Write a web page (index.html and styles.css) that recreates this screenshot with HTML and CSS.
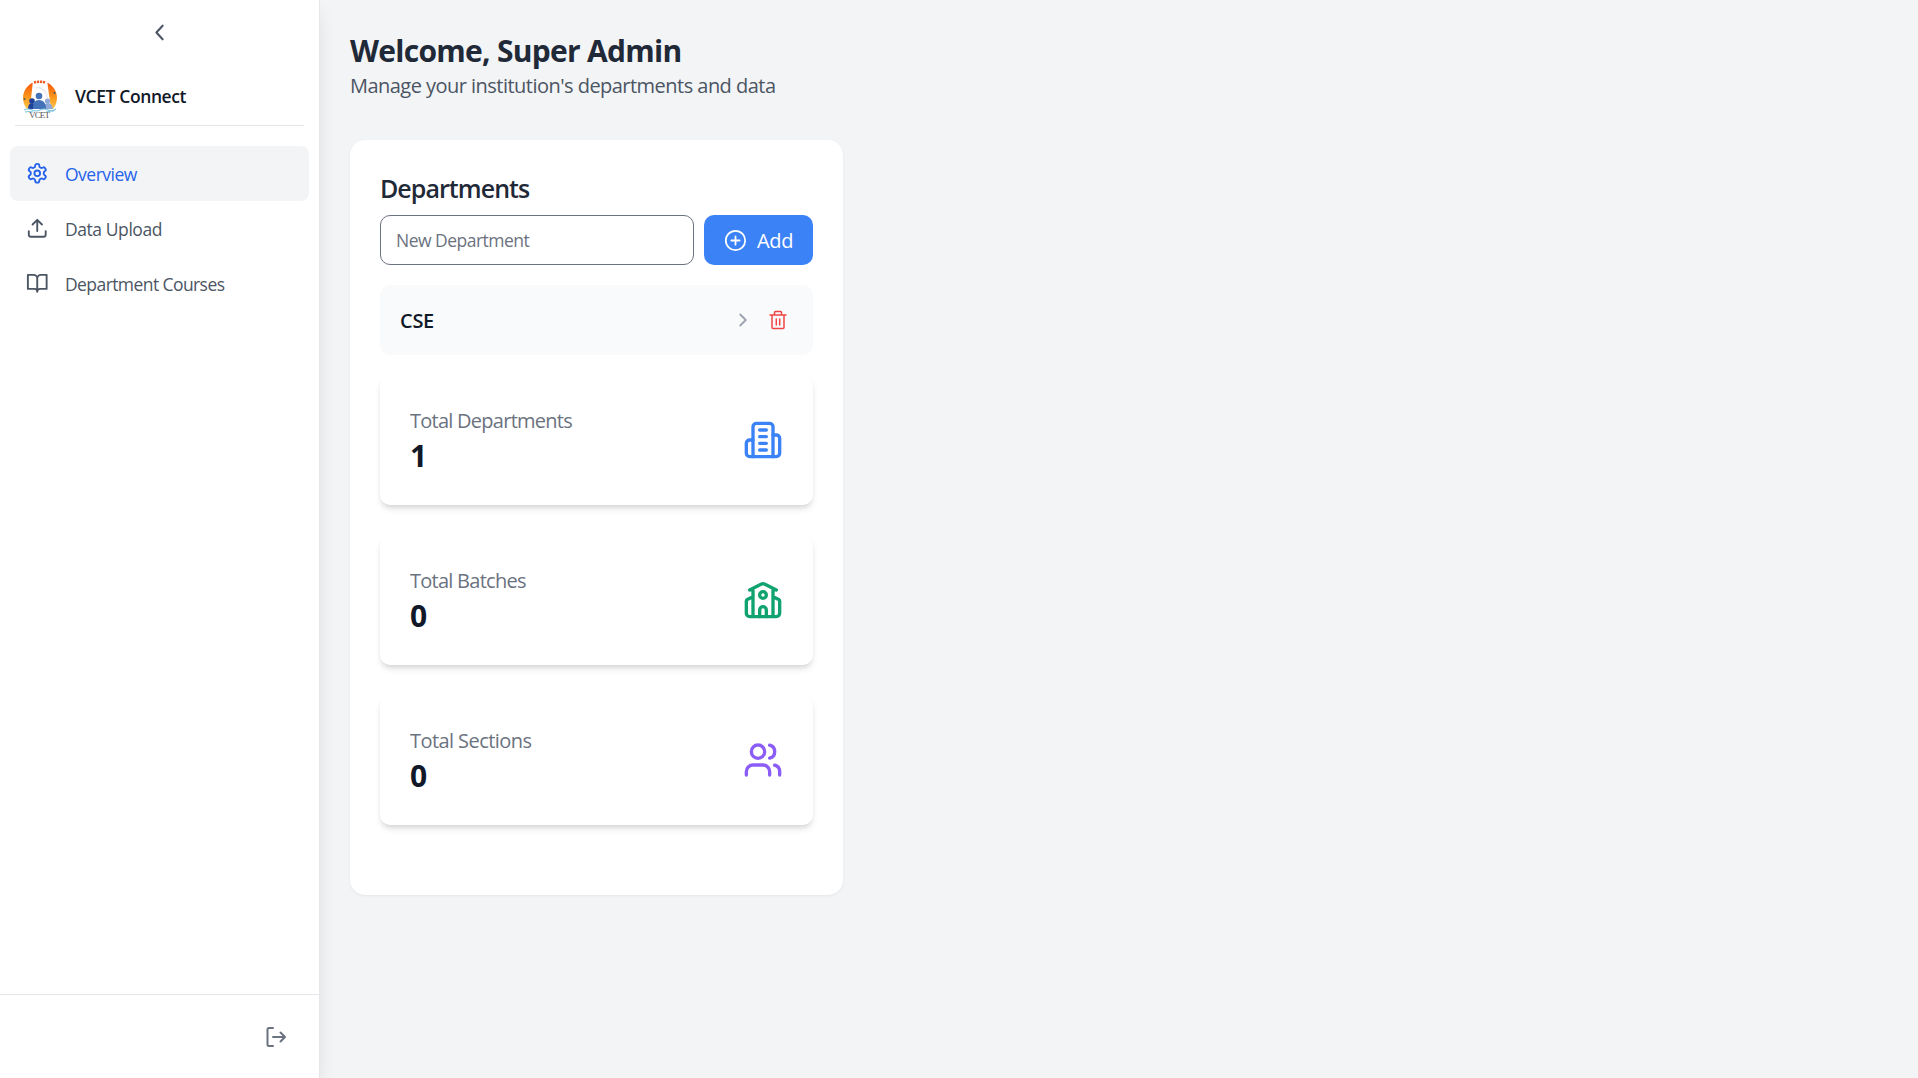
FILE: index.html
```html
<!DOCTYPE html>
<html lang="en">
<head>
<meta charset="utf-8">
<title>VCET Connect</title>
<link rel="stylesheet" href="styles.css">
</head>
<body>
<aside class="sidebar">
  <button class="collapse" aria-label="Collapse">
    <svg class="icon" width="25" height="25" viewBox="0 0 24 24"><path d="m15 18.500-6-6.500 6-6.500"/></svg>
  </button>
  <div class="brand">
    <svg class="logo" width="36" height="40" viewBox="0 0 36 40">
      <defs>
        <linearGradient id="sun" x1="0" y1="0" x2="0" y2="1"><stop offset="0" stop-color="#f4510b"/><stop offset=".5" stop-color="#fb9a1c"/><stop offset="1" stop-color="#fde26a"/></linearGradient>
        <clipPath id="disc"><path d="M0 0h36v29H0z"/></clipPath>
      </defs>
      <g clip-path="url(#disc)">
        <circle cx="18" cy="18" r="17" fill="url(#sun)"/>
        <path d="M11 0h14l4 29H8z" fill="#fff"/>
        <path d="M12 2.500q6-1.500 12 0" fill="none" stroke="#ee5a25" stroke-width="2.600" stroke-dasharray="2.200 .8"/>
        <path d="M13 8q9-2 13 11M16 7q8 3 10 8" fill="none" stroke="#d5d9de" stroke-width=".6"/>
        <circle cx="10" cy="21" r="2.800" fill="#21409a"/><path d="M6 29q0-6 4-6t6 6z" fill="#21409a"/>
        <circle cx="25.500" cy="21" r="2.600" fill="#8fa9d8"/><path d="M21 29q1-6 5-6t5 6z" fill="#8fa9d8"/>
        <circle cx="17" cy="16" r="3.300" fill="#4472b8"/><path d="M11 29v-2q0-7 6-7t7 7v2z" fill="#4472b8"/>
        <circle cx="2.500" cy="19" r=".9" fill="#456"/><circle cx="32.500" cy="13" r="1" fill="#456"/>
      </g>
      <path d="M2 30q4-2 8 0t8 0 8 0 8-1M3 32q4-1 8 0m13 0q4-1 8-1" fill="none" stroke="#7cc6df" stroke-width="1.100"/>
      <text class="logo-text" x="7" y="38" textLength="21">VCET</text>
    </svg>
    <span class="brand-name">VCET Connect</span>
  </div>
  <nav class="nav">
    <a class="nav-item active">
      <svg class="icon" width="22.500" height="22.500" viewBox="0 0 24 24"><path d="M12.220 2h-.44a2 2 0 0 0-2 2v.18a2 2 0 0 1-1 1.730l-.43.25a2 2 0 0 1-2 0l-.15-.08a2 2 0 0 0-2.730.730l-.22.38a2 2 0 0 0 .73 2.730l.15.1a2 2 0 0 1 1 1.720v.51a2 2 0 0 1-1 1.740l-.15.09a2 2 0 0 0-.73 2.730l.22.38a2 2 0 0 0 2.730.730l.15-.08a2 2 0 0 1 2 0l.43.25a2 2 0 0 1 1 1.730V20a2 2 0 0 0 2 2h.44a2 2 0 0 0 2-2v-.18a2 2 0 0 1 1-1.730l.43-.25a2 2 0 0 1 2 0l.15.08a2 2 0 0 0 2.730-.73l.22-.39a2 2 0 0 0-.73-2.730l-.15-.08a2 2 0 0 1-1-1.740v-.5a2 2 0 0 1 1-1.740l.15-.09a2 2 0 0 0 .73-2.730l-.22-.38a2 2 0 0 0-2.730-.73l-.15.08a2 2 0 0 1-2 0l-.43-.25a2 2 0 0 1-1-1.730V4a2 2 0 0 0-2-2z"/><circle cx="12" cy="12" r="3"/></svg>
      <span class="nav-label">Overview</span>
    </a>
    <a class="nav-item">
      <svg class="icon" width="22.500" height="22.500" viewBox="0 0 24 24"><path d="M21 15v4a2 2 0 0 1-2 2H5a2 2 0 0 1-2-2v-4"/><path d="m17 8-5-5-5 5M12 3v12"/></svg>
      <span class="nav-label upload">Data Upload</span>
    </a>
    <a class="nav-item">
      <svg class="icon" width="22.500" height="22.500" viewBox="0 0 24 24"><path d="M2 3h6a4 4 0 0 1 4 4v14a3 3 0 0 0-3-3H2zM22 3h-6a4 4 0 0 0-4 4v14a3 3 0 0 1 3-3h7z"/></svg>
      <span class="nav-label courses">Department Courses</span>
    </a>
  </nav>
  <div class="sidebar-footer">
    <svg class="icon" width="24" height="24" viewBox="0 0 24 24"><path d="M9 21H5a1.500 1.500 0 0 1-1.500-1.500v-15A1.500 1.500 0 0 1 5 3h4M9 12h12M16.500 7.500 21 12l-4.500 4.500"/></svg>
  </div>
</aside>
<main class="main">
  <h1 class="title">Welcome, Super Admin</h1>
  <p class="subtitle">Manage your institution's departments and data</p>
  <section class="panel">
    <h2 class="panel-title">Departments</h2>
    <form class="add-form">
      <input class="field" type="text" placeholder="New Department">
      <button type="button" class="add">
        <svg class="icon" width="25" height="25" viewBox="0 0 24 24"><circle cx="12" cy="12" r="9.300"/><path d="M12 8v8M8 12h8"/></svg>
        <span class="add-label">Add</span>
      </button>
    </form>
    <div class="dept">
      <span class="dept-name">CSE</span>
      <svg class="icon chevron" width="22" height="22" viewBox="0 0 24 24"><path d="m9 18 6-6-6-6"/></svg>
      <svg class="icon trash" width="20" height="20" viewBox="0 0 20 20"><path d="M2 5h16M4 5v12.500a1 1 0 0 0 1 1h10a1 1 0 0 0 1-1V5M6.500 5V2.500a1 1 0 0 1 1-1h5a1 1 0 0 1 1 1V5M8.300 9v6M11.700 9v6"/></svg>
    </div>
    <div class="stats">
      <div class="stat">
        <div><div class="stat-label">Total Departments</div><div class="stat-value">1</div></div>
        <svg class="icon blue" width="40" height="40" viewBox="0 0 24 24"><path d="M6 22V4a2 2 0 0 1 2-2h8a2 2 0 0 1 2 2v18Z"/><path d="M6 12H4a2 2 0 0 0-2 2v6a2 2 0 0 0 2 2h2M18 9h2a2 2 0 0 1 2 2v9a2 2 0 0 1-2 2h-2M10 6h4M10 10h4M10 14h4M10 18h4"/></svg>
      </div>
      <div class="stat">
        <div><div class="stat-label">Total Batches</div><div class="stat-value">0</div></div>
        <svg class="icon green" width="40" height="40" viewBox="0 0 24 24"><path d="M14 22v-4a2 2 0 1 0-4 0v4"/><path d="m18 10 3.447 1.724a1 1 0 0 1 .553.894V20a2 2 0 0 1-2 2H4a2 2 0 0 1-2-2v-7.382a1 1 0 0 1 .553-.894L6 10M18 5v17M4 6l7.106-3.553a2 2 0 0 1 1.788 0L20 6M6 5v17"/><circle cx="12" cy="9" r="2"/></svg>
      </div>
      <div class="stat">
        <div><div class="stat-label sections">Total Sections</div><div class="stat-value">0</div></div>
        <svg class="icon purple" width="40" height="40" viewBox="0 0 24 24"><path d="M16 21v-2a4 4 0 0 0-4-4H6a4 4 0 0 0-4 4v2"/><circle cx="9" cy="7" r="4"/><path d="M22 21v-2a4 4 0 0 0-3-3.870M16 3.130a4 4 0 0 1 0 7.750"/></svg>
      </div>
    </div>
  </section>
</main>
</body>
</html>
```
FILE: styles.css
```css
* { box-sizing: border-box; margin: 0; padding: 0; }
body {
  display: flex;
  height: 100vh;
  overflow: hidden;
  background: #f3f4f6;
  color: #111827;
  font-family: "Open Sans", "Noto Sans", sans-serif;
  font-size: 20px;
  line-height: 30px;
}
button { border: 0; background: none; font: inherit; }
span { white-space: nowrap; }
.icon { display: block; flex: none; fill: none; stroke: currentColor; stroke-width: 2; stroke-linecap: round; stroke-linejoin: round; }

.sidebar {
  display: flex;
  flex-direction: column;
  flex: none;
  width: 320px;
  border-right: 1px solid #e5e7eb;
  background: #fff;
  box-shadow: 0 10px 19px -4px rgba(0, 0, 0, .12);
}
.collapse { display: flex; justify-content: center; padding: 20px 0; color: #4b5563; }
.brand { display: flex; align-items: flex-start; gap: 17px; height: 61px; margin: 0 15px; padding: 15px 7px 0; border-bottom: 1px solid #e5e7eb; }
.logo-text { font: 9px "Liberation Serif", serif; fill: #555; }
.brand-name { padding-top: 1px; font-size: 17.5px; font-weight: 600; letter-spacing: -.4px; }
.nav { flex: 1; padding: 20px 10px 0; }
.nav-item { display: flex; align-items: center; gap: 16.5px; height: 55px; padding: 0 16px; border-radius: 8px; color: #4b5563; font-size: 17.5px; }
.nav-item.active { background: #f3f4f6; color: #2563eb; }
.nav-label { letter-spacing: -.5px; }
.upload { letter-spacing: -.43px; }
.courses { letter-spacing: -.58px; }
.sidebar-footer { display: flex; justify-content: flex-end; height: 84px; padding: 30px 31px 0 0; border-top: 1px solid #e5e7eb; color: #6b7280; }

.main { flex: 1; padding: 31px 30px 30px; }
.title { font-size: 30px; line-height: 40px; font-weight: 700; letter-spacing: -.72px; color: #1f2937; }
.subtitle { letter-spacing: -.53px; color: #4b5563; }
.panel { width: 493px; height: 755px; margin-top: 39px; padding: 31px 30px 30px; border-radius: 15px; background: #fff; box-shadow: 0 1px 3px rgba(0, 0, 0, .06); }
.panel-title { font-size: 25px; line-height: 35px; font-weight: 600; letter-spacing: -.95px; color: #1f2937; }
.add-form { display: flex; gap: 10px; margin: 9px 0 20px; }
.field { flex: 1; min-width: 0; height: 50px; padding: 0 15px; border: 1px solid #6b7280; border-radius: 10px; background: #fff; font: inherit; font-size: 17.5px; letter-spacing: -.52px; }
.field::placeholder { color: #6b7280; opacity: 1; }
.add { display: flex; align-items: center; gap: 9px; width: 109px; height: 50px; padding: 0 19px; border-radius: 10px; background: #3b82f6; color: #fff; }
.add .icon { stroke-width: 1.7; }
.add-label { padding-top: 2px; letter-spacing: -.3px; }
.dept { display: flex; align-items: center; height: 70px; margin-bottom: 20px; padding: 0 25px 0 20px; border-radius: 10px; background: #f9fafb; }
.dept-name { flex: 1; padding-top: 2px; font-weight: 600; letter-spacing: -.3px; }
.chevron { margin-right: 14px; color: #9ca3af; }
.trash { color: #ef4444; stroke-width: 1.5; }
.stats { display: grid; gap: 30px; }
.stat { display: flex; justify-content: space-between; align-items: center; height: 130px; padding: 30px; border-radius: 10px; background: #fff; box-shadow: 0 5px 7.5px -1px rgba(0, 0, 0, .1), 0 2.5px 5px -2px rgba(0, 0, 0, .1); }
.stat-label { padding-top: 2px; letter-spacing: -.74px; color: #6b7280; }
.sections { letter-spacing: -.57px; }
.stat-value { font-size: 30px; line-height: 40px; font-weight: 700; }
.blue { color: #3b82f6; }
.green { color: #10a36f; }
.purple { color: #8b5cf6; }
```
